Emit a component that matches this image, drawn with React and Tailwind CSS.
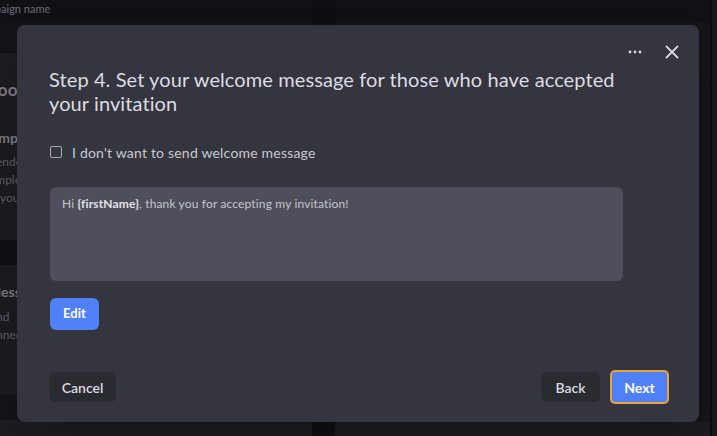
const font = { fontFamily: "Lato, 'Noto Sans', sans-serif" };

function DotsIcon() {
  return (
    <svg width="14" height="4" viewBox="0 0 14 4" fill="currentColor">
      <circle cx="2" cy="2" r="1.4" />
      <circle cx="7" cy="2" r="1.4" />
      <circle cx="12" cy="2" r="1.4" />
    </svg>
  );
}

function CloseIcon() {
  return (
    <svg width="14" height="14" viewBox="0 0 14 14" fill="none" stroke="currentColor" strokeWidth="1.8" strokeLinecap="round">
      <path d="M1.5 1.5 12.5 12.5" />
      <path d="M12.5 1.5 1.5 12.5" />
    </svg>
  );
}

function Background() {
  return (
    <div className="flex h-full w-full">
      <div className="flex w-[312px] flex-col">
        <div className="h-[22px] bg-[#111115] pt-[1px] text-[11px] text-[#6c6c75] whitespace-nowrap">
          <span className="-ml-[27px]">Campaign name</span>
        </div>
        <div className="h-[31px] bg-[#141418]" />
        <div className="h-[60px] bg-[#1c1c21] pt-[24px] text-[17px] font-bold text-[#7a7a84] whitespace-nowrap">
          <span className="-ml-[46px]">Facebook</span>
        </div>
        <div className="h-[127px] bg-[#1b1b20] pt-[14px] whitespace-nowrap">
          <div className="-ml-[18px] text-[14px] font-bold text-[#7a7a84]">Campaigns</div>
          <div className="-ml-[4px] mt-[5px] text-[12px] leading-[18px] text-[#5f5f68]">
            <div>ender</div>
            <div className="-ml-[4px]">Implemented</div>
            <div className="ml-[4px]">your</div>
          </div>
        </div>
        <div className="h-[25px] bg-[#111115]" />
        <div className="h-[130px] bg-[#1b1b20] pt-[16px] whitespace-nowrap">
          <div className="-ml-[12px] text-[14px] font-bold text-[#7a7a84]">Messages</div>
          <div className="-ml-[4px] mt-[6px] text-[12px] leading-[18px] text-[#5f5f68]">
            <div>nd</div>
            <div>nnection</div>
          </div>
        </div>
        <div className="h-[25px] bg-[#141418]" />
        <div className="flex-1 bg-[#1c1c21]" />
      </div>
      <div className="w-[23px] bg-[#0f0f13]" />
      <div className="flex flex-1 flex-col">
        <div className="h-[22px] bg-[#111115]" />
        <div className="flex-1 bg-[#151519]" />
        <div className="h-[14px] bg-[#1b1b20]" />
      </div>
      <div className="w-[2px] bg-[#0c0c0f]" />
      <div className="w-[5px] bg-[#18181c]" />
    </div>
  );
}

export default function App() {
  return (
    <div className="relative h-[436px] w-[717px] overflow-hidden bg-[#141418]" style={font}>
      <Background />

      <div className="absolute left-[17px] top-[25px] flex h-[397px] w-[682px] flex-col rounded-[8px] bg-[#35353f] px-[32px] pb-[20px] pt-[15px] shadow-2xl">
        <div className="-mr-[12px] flex h-[24px] items-center justify-end gap-[23px] text-[#d6d6dc]">
          <DotsIcon />
          <CloseIcon />
        </div>

        <h2 className="mt-[3px] w-[590px] text-[20px] font-normal leading-[24px] tracking-[0.1px] text-[#dcdce2]">
          Step 4. Set your welcome message for those who have accepted your invitation
        </h2>

        <label className="mt-[27px] flex h-[20px] items-center gap-[10px] text-[14px] tracking-[0.2px] text-[#c9c9d0]">
          <span className="ml-[1px] h-[12px] w-[12px] rounded-[2px] border-[1.5px] border-[#a8a8b0]" />
          I don't want to send welcome message
        </label>

        <div className="ml-[1px] mt-[25px] h-[94px] w-[573px] rounded-[6px] bg-[#4f4f5b] px-[12px] pt-[9px] text-[12px] leading-[16px] tracking-[0.15px] text-[#c4c4cc]">
          Hi <span className="font-bold text-[#e2e2e8]">{"{firstName}"}</span>, thank you for accepting my invitation!
        </div>

        <div className="ml-[1px] mt-[17px]">
          <button className="h-[32px] w-[49px] rounded-[6px] bg-[#5080f6] text-[13px] font-bold text-white">
            Edit
          </button>
        </div>

        <div className="mt-auto flex items-center justify-between">
          <button className="h-[30px] w-[67px] rounded-[6px] bg-[#2a2a31] text-[14px] font-semibold text-[#dadae0]">
            Cancel
          </button>
          <div className="flex items-center gap-[12px]">
            <button className="h-[30px] w-[59px] rounded-[6px] bg-[#2a2a31] text-[14px] font-semibold text-[#dadae0]">
              Back
            </button>
            <button className="h-[30px] w-[55px] rounded-[3px] bg-[#5080f6] text-[14px] font-bold text-white ring-2 ring-[#e9a43c]">
              Next
            </button>
          </div>
        </div>
      </div>
    </div>
  );
}
